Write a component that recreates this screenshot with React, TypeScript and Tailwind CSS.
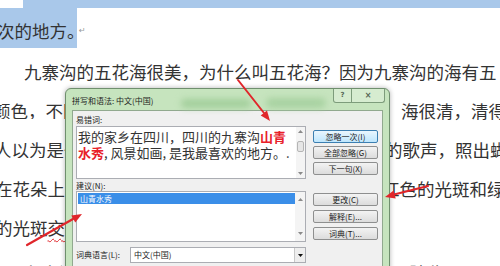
export default function App() {
  return (
    <div className="relative h-[266px] w-[500px] overflow-hidden bg-white font-['Noto_Sans_CJK_SC','Noto_Sans',sans-serif]">
      <DocText />
      <SpellDialog />
      <Arrows />
    </div>
  );
}

function DocText() {
  return (
    <div className="flex flex-col whitespace-nowrap text-[17.5px] leading-none text-[#333]">
      <div className="ml-[23px] h-[8px] bg-[#a9c8ea]" />
      <div className="flex h-[40px]">
        <div className="flex w-[77px] items-center overflow-hidden bg-[#a9c8ea] pt-[5px]">
          <span className="-ml-[3px] shrink-0">次的地方。</span>
        </div>
        <span className="pl-[2px] pt-[19px] font-['DejaVu_Sans',sans-serif] text-[8px] text-[#999]">↵</span>
      </div>
      <div className="mt-[4px] flex h-[39px] items-center pl-[24px]">
        九寨沟的五花海很美，为什么叫五花海？因为九寨沟的海有五
      </div>
      <div className="flex h-[39px] items-center">
        <span className="-ml-[7px] w-[408px] shrink-0 overflow-hidden">颜色，不同的</span>
        <span>海很清，清得</span>
      </div>
      <div className="flex h-[39px] items-center">
        <span className="-ml-[6px] w-[391px] shrink-0 overflow-hidden">人以为是一只</span>
        <span>的歌声，照出蝴</span>
      </div>
      <div className="flex h-[39px] items-center">
        <span className="-ml-[5px] w-[387px] shrink-0 overflow-hidden">在花朵上舞动</span>
        <span>红色的光斑和绿</span>
      </div>
      <div className="flex h-[39px] items-center">
        <span className="-ml-[5px] shrink-0">
          的光斑<span className="underline decoration-[#e0262b] decoration-wavy decoration-1 underline-offset-[3px]">交错</span>
        </span>
      </div>
      <div className="mt-[6px] flex h-[39px] items-center pl-[24px]">
        九寨沟的水清澈见底，四季变幻，五彩斑斓，美不胜收
      </div>
    </div>
  );
}

function Btn({ label, primary }: { label: string; primary?: boolean }) {
  return (
    <div
      className={
        primary
          ? "flex h-[13px] items-center justify-center rounded-[2px] border border-[#3c7fb1] bg-gradient-to-b from-[#eaf6fd] to-[#bee6fd] text-[8px] leading-none text-[#222]"
          : "flex h-[13px] items-center justify-center rounded-[2px] border border-[#8e8f8f] bg-gradient-to-b from-[#f3f3f3] to-[#dcdcdc] text-[8px] leading-none text-[#222]"
      }
    >
      {label}
    </div>
  );
}

function ScrollArrow({ down }: { down?: boolean }) {
  return (
    <div className="flex h-[9px] items-center justify-center">
      <svg width="5" height="3" viewBox="0 0 5 3">
        <path d={down ? "M0 0H5L2.5 3Z" : "M0 3H5L2.5 0Z"} fill="#8a8a8a" />
      </svg>
    </div>
  );
}

function SpellDialog() {
  return (
    <div className="absolute left-[65px] top-[88px] flex h-[200px] w-[325px] flex-col overflow-hidden rounded-t-[6px] border border-[#6f8f6e] bg-[#c6e4be] shadow-[0_0_5px_rgba(0,0,0,0.3)]">
      <div className="relative flex h-[21px] shrink-0">
        <div className="absolute left-[115px] top-[10px] h-[9px] w-[70px] rounded-full bg-[#a3cf9c] blur-[3px]" />
        <div className="absolute left-[200px] top-[9px] h-[10px] w-[60px] rounded-full bg-[#a8d2a1] blur-[3px]" />
        <span className="relative self-center pl-[6px] pt-[3px] text-[8px] leading-none text-[#1d1d1d]">
          拼写和语法: 中文(中国)
        </span>
        <div className="relative ml-auto mr-[4px] flex h-[14px]">
          <div className="flex w-[19px] items-center justify-center rounded-bl-[3px] border border-t-0 border-[#7d9c7b] bg-[#d6ecd0] font-['DejaVu_Sans',sans-serif] text-[7px] font-bold text-[#556655]">
            ?
          </div>
          <div className="flex w-[33px] items-center justify-center rounded-br-[3px] border border-l-0 border-t-0 border-[#7d9c7b] bg-[#d6ecd0] font-['DejaVu_Sans',sans-serif] text-[8px] font-bold text-[#556655]">
            ×
          </div>
        </div>
      </div>

      <div className="mx-[6px] flex flex-1 flex-col border border-[#91a98f] bg-[#f0f0f0] pl-[3px] pt-[2px] text-[8px] leading-none text-[#222]">
        <div className="flex gap-[7px]">
          <div className="flex w-[230px] flex-col">
            <div className="flex h-[13px] items-center">易错词:</div>
            <div className="flex h-[53px] border border-[#abadb3] bg-white">
              <div className="flex-1 overflow-hidden whitespace-nowrap pl-[1px] pt-[2px] text-[13px] leading-[16px] text-[#333]">
                <div>
                  我的家乡在四川，四川的九寨沟<span className="font-bold text-[#e8202a]">山青</span>
                </div>
                <div>
                  <span className="font-bold text-[#e8202a]">水秀</span>, 风景如画, 是我最喜欢的地方。.
                </div>
              </div>
              <div className="flex w-[9px] flex-col bg-[#f4f4f4]">
                <ScrollArrow />
                <div className="mx-[1px] mt-[5px] h-[11px] rounded-[2px] border border-[#b5b5b5] bg-[#e6e6e6]" />
                <div className="flex-1" />
                <ScrollArrow down />
              </div>
            </div>
          </div>
          <div className="flex w-[65px] flex-col gap-[3px] pt-[17px]">
            <Btn label="忽略一次(I)" primary />
            <Btn label="全部忽略(G)" />
            <Btn label="下一句(X)" />
          </div>
        </div>

        <div className="flex gap-[7px]">
          <div className="flex w-[230px] flex-col">
            <div className="flex h-[12px] items-end pb-[1px]">建议(N):</div>
            <div className="flex h-[51px] border border-[#abadb3] bg-white">
              <div className="flex-1 pl-[1px] pt-[1px]">
                <div className="flex h-[11px] items-center bg-[#3a8ee8] pl-[2px] text-white">山青水秀</div>
              </div>
              <div className="flex w-[10px] flex-col justify-between bg-[#f4f4f4] py-[3px]">
                <ScrollArrow />
                <ScrollArrow down />
              </div>
            </div>
          </div>
          <div className="flex w-[65px] flex-col gap-[4px] pt-[14px]">
            <Btn label="更改(C)" />
            <Btn label="解释(E)..." />
            <Btn label="词典(T)..." />
          </div>
        </div>

        <div className="mt-[5px] flex items-center">
          <span className="w-[54px]">词典语言(L):</span>
          <div className="flex h-[16px] w-[176px] items-center border border-[#abadb3] bg-white">
            <span className="flex-1 pl-[3px]">中文(中国)</span>
            <div className="flex h-[14px] w-[11px] items-center justify-center border-l border-[#c8c8c8] bg-[#eeeeee]">
              <svg width="5" height="3" viewBox="0 0 5 3">
                <path d="M0 0H5L2.5 3Z" fill="#111" />
              </svg>
            </div>
          </div>
        </div>
      </div>
    </div>
  );
}

function Arrows() {
  return (
    <svg className="pointer-events-none absolute inset-0" width="500" height="266" viewBox="0 0 500 266">
      <g fill="#e0262b" stroke="#e0262b" strokeLinecap="round">
        <line x1="238" y1="80" x2="264" y2="113" strokeWidth="2" />
        <polygon points="270,121 260.7,115.6 267,110.6" stroke="none" />
        <line x1="27" y1="245" x2="73" y2="219" strokeWidth="2.2" />
        <polygon points="82,214 75.3,222.4 71.3,215.4" stroke="none" />
        <line x1="428" y1="186" x2="394" y2="194.5" strokeWidth="2.2" />
        <polygon points="385,197 393.7,190.6 395.7,198.4" stroke="none" />
      </g>
    </svg>
  );
}
